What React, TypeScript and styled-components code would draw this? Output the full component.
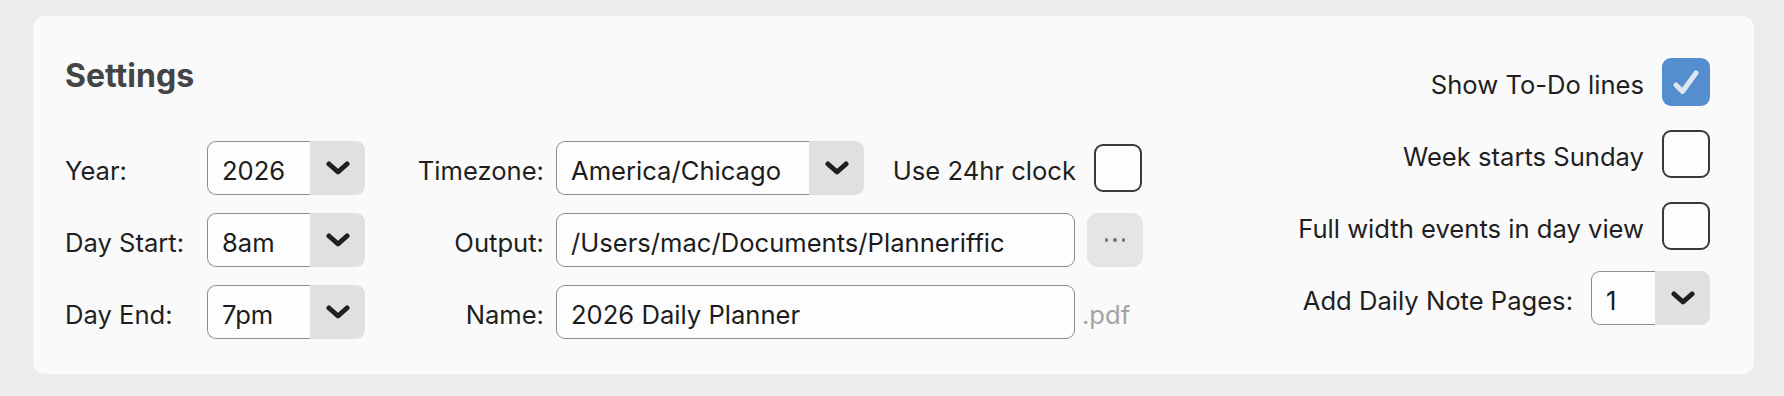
import React from "react";
import styled, { createGlobalStyle } from "styled-components";

const Global = createGlobalStyle`
  html, body { margin: 0; padding: 0; background: #ececec; }
  body { font-family: Inter, "Noto Sans", sans-serif; color: #222; }
`;

const Page = styled.div`
  padding: 16px 30px 23px 33px;
`;

const Panel = styled.section`
  display: flex;
  justify-content: space-between;
  align-items: flex-start;
  background: #fafafa;
  border-radius: 12px;
  padding: 37px 44px 35px 32px;
`;

const LeftBlock = styled.div`
  display: flex;
  flex-direction: column;
`;

const Title = styled.h2`
  margin: 4px 0 46px 0;
  font-size: 32px;
  line-height: 38px;
  font-weight: 700;
  color: #444;
`;

const FormGrid = styled.div`
  display: grid;
  grid-template-columns: 130px 158px 167px 519px 55px;
  grid-auto-rows: 54px;
  column-gap: 12px;
  row-gap: 18px;
  align-items: center;
`;

const Label = styled.div<{ $align?: "left" | "right" }>`
  font-size: 25.6px;
  padding-top: 4px;
  color: #1f1f1f;
  white-space: nowrap;
  text-align: ${(p) => p.$align ?? "left"};
`;

const SelectBox = styled.div<{ $w: number }>`
  display: flex;
  width: ${(p) => p.$w}px;
  height: 54px;
`;

const SelectValue = styled.div`
  flex: 1;
  display: flex;
  align-items: center;
  padding: 4px 0 0 14px;
  border: 1.5px solid #8e8e8e;
  border-right: none;
  border-radius: 9px 0 0 9px;
  background: #fdfdfd;
  font-size: 25.6px;
  color: #1c1c1c;
`;

const SelectArrow = styled.div`
  width: 55px;
  flex: none;
  display: flex;
  align-items: center;
  justify-content: center;
  background: #e0e0e0;
  border-radius: 0 9px 9px 0;
`;

const TextField = styled.div`
  height: 54px;
  box-sizing: border-box;
  display: flex;
  align-items: center;
  padding: 4px 0 0 14px;
  border: 1.5px solid #8e8e8e;
  border-radius: 9px;
  background: #fdfdfd;
  font-size: 25.6px;
  color: #1c1c1c;
  white-space: nowrap;
  overflow: hidden;
`;

const SpanRow = styled.div`
  grid-column: 4 / span 2;
  display: flex;
  align-items: center;
`;

const PushRight = styled.div`
  margin-left: auto;
  display: flex;
  align-items: center;
  gap: 18px;
`;

const Box = styled.div<{ $checked?: boolean }>`
  width: 48px;
  height: 48px;
  box-sizing: border-box;
  border-radius: 9px;
  flex: none;
  display: flex;
  align-items: center;
  justify-content: center;
  background: ${(p) => (p.$checked ? "#548ecf" : "#fdfdfd")};
  border: ${(p) => (p.$checked ? "none" : "2px solid #3a3a3a")};
`;

const DotsButton = styled.div`
  width: 56px;
  height: 54px;
  border-radius: 10px;
  background: #e5e5e5;
  display: flex;
  align-items: center;
  justify-content: center;
  gap: 5px;
`;

const Dot = styled.span`
  width: 3.5px;
  height: 3.5px;
  border-radius: 50%;
  background: #777;
`;

const Suffix = styled.div`
  font-size: 25.6px;
  padding-top: 4px;
  color: #a3a3a3;
  margin-left: -5px;
`;

const RightBlock = styled.div`
  margin-top: 2px;
  display: flex;
  flex-direction: column;
  align-items: flex-end;
  gap: 18px;
`;

const RightRow = styled.div`
  height: 54px;
  display: flex;
  align-items: center;
  justify-content: flex-end;
  gap: 18px;
`;

const Chevron = () => (
  <svg width="24" height="14" viewBox="0 0 24 14">
    <path
      d="M3 3 L12 11 L21 3"
      fill="none"
      stroke="#1f1f1f"
      strokeWidth="5"
      strokeLinecap="round"
      strokeLinejoin="round"
    />
  </svg>
);

const Select = ({ w, value }: { w: number; value: string }) => (
  <SelectBox $w={w}>
    <SelectValue>{value}</SelectValue>
    <SelectArrow>
      <Chevron />
    </SelectArrow>
  </SelectBox>
);

const Checkbox = ({ checked }: { checked?: boolean }) => (
  <Box $checked={checked}>
    {checked && (
      <svg width="48" height="48" viewBox="0 0 48 48">
        <path
          d="M14 27 L20.5 33.5 L34 15"
          fill="none"
          stroke="#dfe6f1"
          strokeWidth="5"
          strokeLinecap="round"
          strokeLinejoin="round"
        />
      </svg>
    )}
  </Box>
);

export default function App() {
  return (
    <Page>
      <Global />
      <Panel>
        <LeftBlock>
          <Title>Settings</Title>
          <FormGrid>
            <Label>Year:</Label>
            <Select w={158} value="2026" />
            <Label $align="right">Timezone:</Label>
            <SpanRow>
              <Select w={308} value="America/Chicago" />
              <PushRight>
                <Label>Use 24hr clock</Label>
                <Checkbox />
              </PushRight>
            </SpanRow>

            <Label>Day Start:</Label>
            <Select w={158} value="8am" />
            <Label $align="right">Output:</Label>
            <TextField>/Users/mac/Documents/Planneriffic</TextField>
            <DotsButton>
              <Dot />
              <Dot />
              <Dot />
            </DotsButton>

            <Label>Day End:</Label>
            <Select w={158} value="7pm" />
            <Label $align="right">Name:</Label>
            <TextField>2026 Daily Planner</TextField>
            <Suffix>.pdf</Suffix>
          </FormGrid>
        </LeftBlock>

        <RightBlock>
          <RightRow>
            <Label>Show To-Do lines</Label>
            <Checkbox checked />
          </RightRow>
          <RightRow>
            <Label>Week starts Sunday</Label>
            <Checkbox />
          </RightRow>
          <RightRow>
            <Label>Full width events in day view</Label>
            <Checkbox />
          </RightRow>
          <RightRow>
            <Label>Add Daily Note Pages:</Label>
            <Select w={119} value="1" />
          </RightRow>
        </RightBlock>
      </Panel>
    </Page>
  );
}
